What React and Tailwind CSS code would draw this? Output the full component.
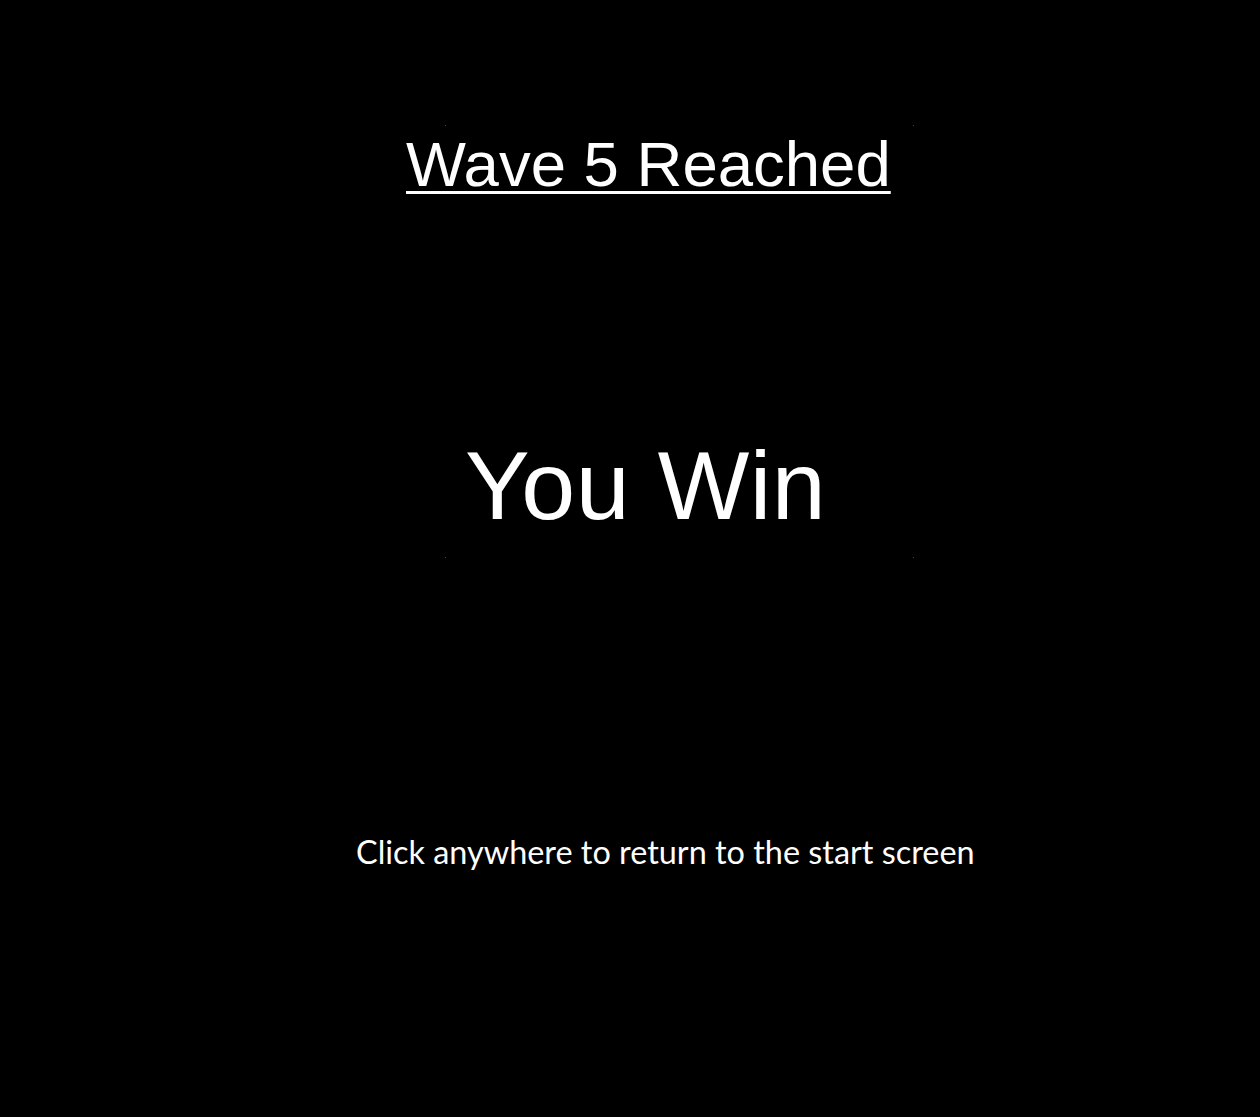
import React from "react";

const Dot = ({ className }) => (
  <span className={`absolute w-px h-px bg-[#4a4a4a] ${className}`} />
);

export default function App() {
  return (
    <div className="relative w-full h-[1117px] bg-black text-white overflow-hidden cursor-pointer">
      {/* faint frame corners */}
      <div className="absolute left-[445px] top-[125px] w-[469px] h-[433px] pointer-events-none">
        <Dot className="left-0 top-0" />
        <Dot className="right-0 top-0" />
        <Dot className="left-0 bottom-0" />
        <Dot className="right-0 bottom-0" />
      </div>

      <div className="flex flex-col items-start">
        <h1
          className="ml-[406px] mt-[133px] text-[63.5px] leading-none underline decoration-[3px] underline-offset-[5px]"
          style={{ fontFamily: '"Liberation Sans", Arial, sans-serif' }}
        >
          Wave 5 Reached
        </h1>

        <h2
          className="ml-[465px] mt-[240px] text-[97px] leading-none tracking-[0.5px]"
          style={{ fontFamily: '"Liberation Sans", Arial, sans-serif' }}
        >
          You Win
        </h2>

        <p
          className="ml-[356px] mt-[302px] text-[32.4px] leading-none"
          style={{ fontFamily: "Lato, sans-serif" }}
        >
          Click anywhere to return to the start screen
        </p>
      </div>
    </div>
  );
}
